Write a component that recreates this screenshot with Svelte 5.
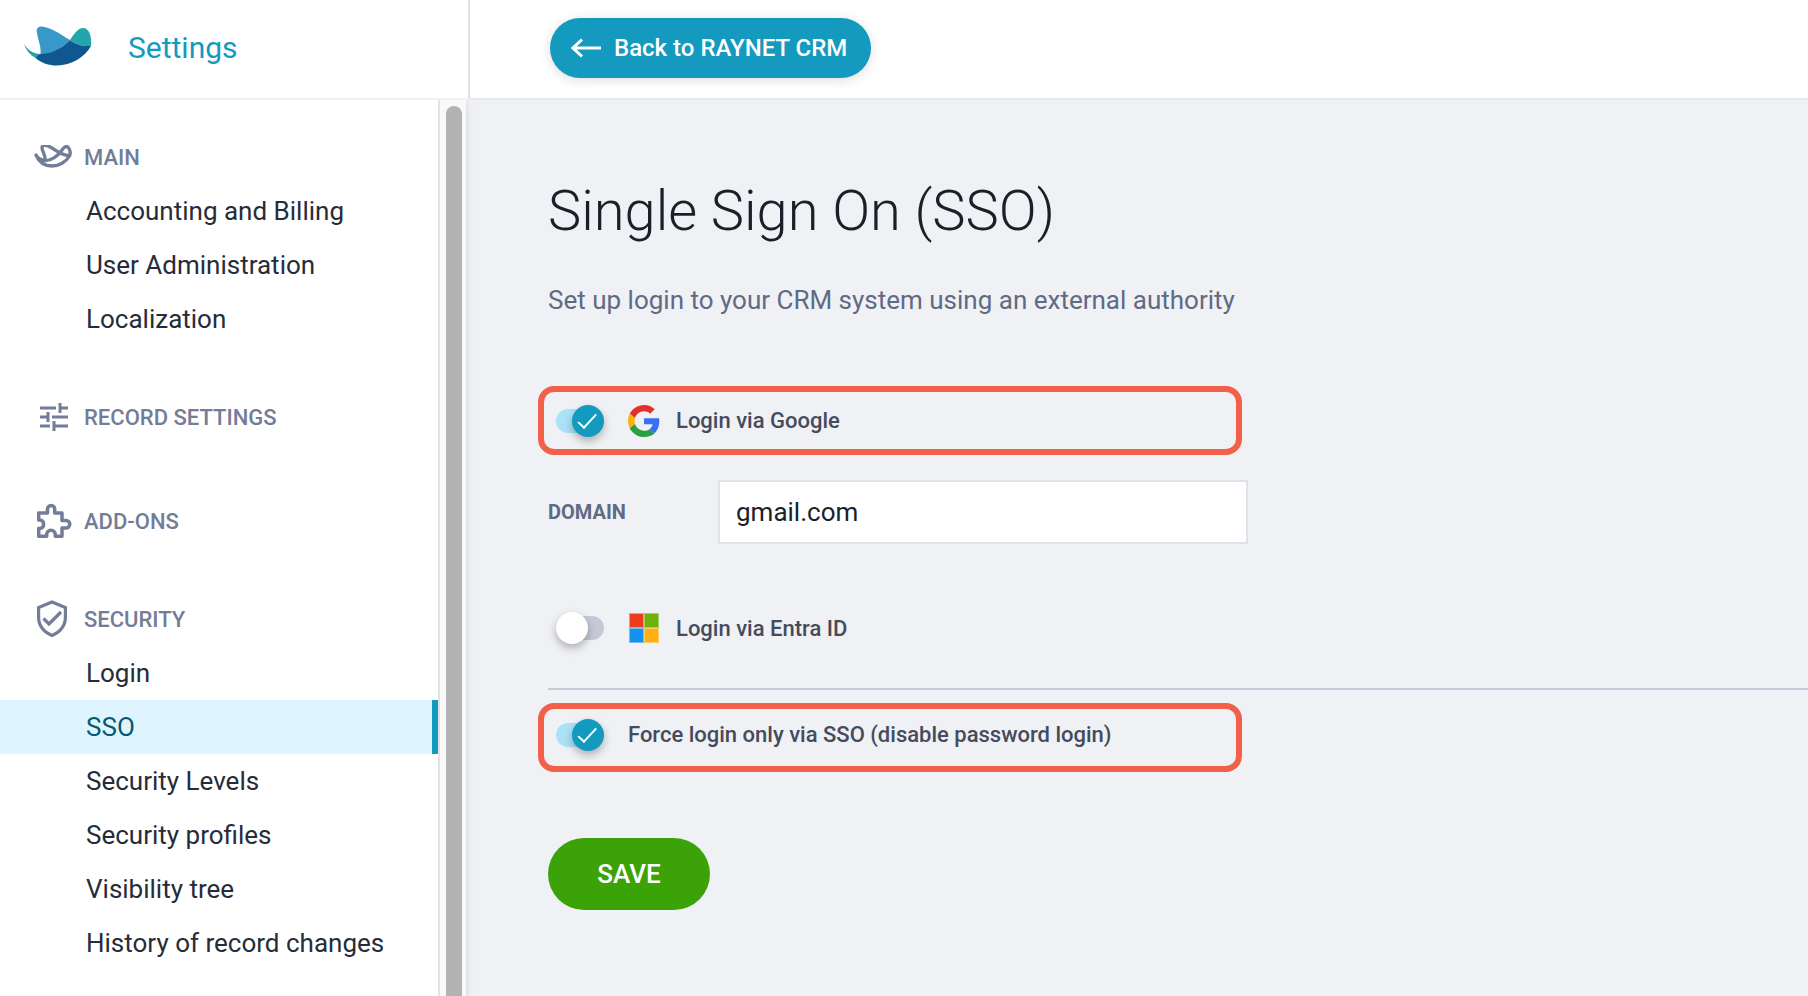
<script>
  const sections = [
    { title: 'MAIN', icon: 'ray', items: ['Accounting and Billing', 'User Administration', 'Localization'] },
    { title: 'RECORD SETTINGS', icon: 'tune', items: [] },
    { title: 'ADD-ONS', icon: 'puzzle', items: [] },
    {
      title: 'SECURITY',
      icon: 'shield',
      items: ['Login', 'SSO', 'Security Levels', 'Security profiles', 'Visibility tree', 'History of record changes']
    }
  ];
  let active = $state('SSO');
  let google = $state(true);
  let entra = $state(false);
  let force = $state(true);
  let domain = $state('gmail.com');
</script>

<div class="page">
  <header class="top">
    <div class="brand">
      <svg class="logo" viewBox="0 0 68 40" aria-hidden="true">
        <path fill="#22a5ab" d="M0 18C3 23 8 27.500 16.500 28L11.500 32C6 29 2 24 0 18Z" />
        <path fill="#3798c9" d="M13 7C12 2.500 14 .500 18 .500C27 1.500 37 8.500 46 14C38 23 28 28 16.500 28.200C17.500 21 14 14 13 7Z" />
        <path fill="#22a5ab" d="M46 14C50 8 54 2 59 2C65 2 68 10 67 20C59 20.500 51 18.500 46 14Z" />
        <path fill="#0f588f" d="M11.500 32C14 29.500 15 28.200 17 28.100C29 27 38 22.500 46 14C51 18.500 59 20.500 67 20C61 31 47 39.500 33 39.500C25 39.500 17 37 11.500 32Z" />
      </svg>
      <span class="brand-name">Settings</span>
    </div>
    <div class="top-main">
      <a class="back" href="#crm">
        <svg viewBox="0 0 30 20" width="30" height="20" aria-hidden="true">
          <path d="M30 10H2M11 1.500L2 10L11 18.500" fill="none" stroke="#fff" stroke-width="3" />
        </svg>
        Back to RAYNET CRM
      </a>
    </div>
  </header>

  <div class="body">
    <nav class="side" aria-label="Settings">
      <div class="menu">
        {#each sections as s}
          <section class="group {s.icon}">
            <h2>
              <span class="gicon">
                {#if s.icon === 'ray'}
                  <svg viewBox="0 1 38 24" width="38" height="24" fill="none" stroke="#737d98" stroke-width="3.300" stroke-linejoin="round" stroke-linecap="round">
                    <path d="M2 11C4 15 7 16 11 16.500C17 17 24 12 28 6C30 3 31 2 33 2.500C36 4 37 9 35.500 12C32 18 25 22 18 22C11 22 5 18 2 11Z" />
                    <path d="M11 16C12 12 8 7 8 4C8 1 11 1 14 2C20 4 25 11 35 11.500" />
                  </svg>
                {:else if s.icon === 'tune'}
                  <svg viewBox="0 0 28 28" width="28" height="28" fill="none" stroke="#737d98" stroke-width="3">
                    <path d="M0 5H16M20 0V10M20 5H28M0 14H8M8 9V19M12 14H28M0 23H10M14 18V28M14 23H28" />
                  </svg>
                {:else if s.icon === 'puzzle'}
                  <svg viewBox="0.500 0 36 36" width="36" height="36" fill="none" stroke="#737d98" stroke-width="3.500" stroke-linejoin="round">
                    <path d="M2.200 10H11V6A3.600 3.600 0 0 1 18.200 6V10H25.500V17.500H29.500A3.700 3.700 0 0 1 29.500 25H25.500V33.300H18.800V31.500A4.300 4.300 0 0 0 10.200 31.500V33.300H2.200V25.500H3.500A4.300 4.300 0 0 0 3.500 17H2.200Z" />
                  </svg>
                {:else}
                  <svg viewBox="0 0.500 30 38" width="30" height="38" fill="none" stroke="#737d98" stroke-width="3.200">
                    <path d="M15 2.500L28.400 8V18C28.400 26 23 33 15 36C7 33 1.600 26 1.600 18V8Z" />
                    <path d="M6.500 19L12 24.500L24 12.500" />
                  </svg>
                {/if}
              </span>
              {s.title}
            </h2>
            {#if s.items.length}
              <ul>
                {#each s.items as item}
                  <li>
                    <a
                      href="#{item.toLowerCase().replaceAll(' ', '-')}"
                      class:active={active === item}
                      aria-current={active === item ? 'page' : undefined}
                      onclick={() => (active = item)}>{item}</a>
                  </li>
                {/each}
              </ul>
            {/if}
          </section>
        {/each}
      </div>
      <div class="scroll" aria-hidden="true"><div class="thumb"></div></div>
    </nav>

    <main>
      <h1>Single Sign On (SSO)</h1>
      <p class="lead">Set up login to your CRM system using an external authority</p>

      <label class="option marked">
        <input class="toggle" type="checkbox" bind:checked={google} />
        <svg class="provider" viewBox="0 0 48 48" aria-hidden="true">
          <path fill="#e52f29" d="M24 9.500c3.540 0 6.710 1.220 9.210 3.600l6.850-6.850C35.900 2.380 30.470 0 24 0 14.620 0 6.510 5.380 2.560 13.220l7.980 6.190C12.430 13.720 17.740 9.500 24 9.500z" />
          <path fill="#376ff5" d="M46.980 24.550c0-1.570-.15-3.090-.38-4.550H24v9.020h12.940c-.58 2.960-2.260 5.480-4.780 7.180l7.730 6c4.510-4.180 7.090-10.360 7.090-17.650z" />
          <path fill="#fbb20b" d="M10.530 28.590c-.48-1.450-.76-2.990-.76-4.590s.27-3.140.76-4.590l-7.980-6.190C.92 16.460 0 20.120 0 24c0 3.880.92 7.540 2.560 10.780l7.970-6.190z" />
          <path fill="#2e9e44" d="M24 48c6.480 0 11.930-2.130 15.890-5.810l-7.730-6c-2.150 1.450-4.920 2.300-8.160 2.300-6.260 0-11.570-4.220-13.470-9.910l-7.980 6.190C6.510 42.620 14.620 48 24 48z" />
        </svg>
        <span>Login via Google</span>
      </label>

      <div class="field">
        <label for="domain">DOMAIN</label>
        <input id="domain" type="text" bind:value={domain} />
      </div>

      <label class="option entra">
        <input class="toggle" type="checkbox" bind:checked={entra} />
        <svg class="provider" viewBox="0 0 32 32" aria-hidden="true">
          <path fill="#f59a80" d="M1 1H16V16H1Z" /><path fill="#a6cf6b" d="M16 1H31V16H16Z" />
          <path fill="#72bdf3" d="M1 16H16V31H1Z" /><path fill="#fccd70" d="M16 16H31V31H16Z" />
          <path fill="#ef3b1d" d="M2 2H15V15H2Z" /><path fill="#70b20b" d="M17 2H30V15H17Z" />
          <path fill="#1592ee" d="M2 17H15V30H2Z" /><path fill="#ffaf10" d="M17 17H30V30H17Z" />
        </svg>
        <span>Login via Entra ID</span>
      </label>

      <hr />

      <label class="option marked force">
        <input class="toggle" type="checkbox" bind:checked={force} />
        <span>Force login only via SSO (disable password login)</span>
      </label>

      <button class="save" type="button">SAVE</button>
    </main>
  </div>
</div>

<style>
  :global(body) {
    margin: 0;
    background: #eff1f5;
  }
  .page {
    min-height: 100vh;
    display: flex;
    flex-direction: column;
    font-family: Roboto, 'Liberation Sans', sans-serif;
    color: #262c38;
  }
  .page * {
    box-sizing: border-box;
  }
  a {
    text-decoration: none;
  }
  .top {
    display: flex;
    background: #fff;
  }
  .brand {
    flex: none;
    width: 470px;
    height: 100px;
    display: flex;
    align-items: flex-start;
    gap: 36px;
    padding: 26px 24px 0;
    border-right: 2px solid #dfe1ea;
    border-bottom: 2px solid #eff0f6;
  }
  .logo {
    width: 68px;
    height: 40px;
  }
  .brand-name {
    font-size: 30px;
    line-height: 44px;
    color: #1499bf;
  }
  .top-main {
    flex: 1;
    display: flex;
    align-items: flex-start;
    padding: 18px 80px 0;
    border-bottom: 2px solid #e7e9ed;
  }
  .back {
    display: flex;
    align-items: center;
    gap: 13px;
    height: 60px;
    padding: 0 24px 0 21px;
    border-radius: 30px;
    background: #1499bf;
    color: #fff;
    font-size: 24px;
    font-weight: 500;
    box-shadow: 0 2px 12px rgba(0, 0, 0, 0.14);
  }
  .body {
    flex: 1;
    display: flex;
  }
  .side {
    flex: none;
    width: 466px;
    display: flex;
    background: #fff;
    box-shadow: 0 2px 8px rgba(0, 0, 0, 0.12);
    clip-path: inset(0 -12px 0 0);
  }
  .menu {
    flex: 1;
    display: flex;
    flex-direction: column;
    gap: 44px;
    padding: 30px 0;
  }
  .scroll {
    width: 28px;
    padding: 6px 4px 0 6px;
    border-left: 2px solid #e2e2e2;
    background: #f9f9f9;
    display: flex;
  }
  .thumb {
    width: 16px;
    border-radius: 8px 8px 0 0;
    background: #b3b3b3;
  }
  h2 {
    display: flex;
    align-items: center;
    height: 54px;
    margin: 0;
    padding-left: 34px;
    font-size: 22px;
    font-weight: 500;
    color: #737d98;
  }
  .gicon {
    flex: none;
    width: 50px;
    height: 38px;
    display: flex;
    align-items: center;
    padding-left: 3px;
  }
  .ray .gicon {
    padding-left: 0;
  }
  .tune .gicon {
    padding-left: 6px;
  }
  .tune {
    padding-bottom: 6px;
  }
  ul {
    list-style: none;
    margin: 0;
    padding: 0;
  }
  .menu a {
    display: block;
    padding-left: 86px;
    font-size: 26px;
    line-height: 54px;
    color: #262c38;
  }
  .menu a.active {
    background: #def4fe;
    border-right: 6px solid #1499bf;
    color: #07596f;
  }
  main {
    flex: 1;
    min-width: 0;
    display: flex;
    flex-direction: column;
    align-items: flex-start;
    padding: 76px 0 40px 82px;
  }
  h1 {
    margin: 0;
    font-size: 56px;
    line-height: 70px;
    font-weight: 300;
    color: #1c1f27;
  }
  .lead {
    margin: 38px 0 0;
    font-size: 26px;
    line-height: 32px;
    color: #616a84;
  }
  .option {
    display: flex;
    align-items: center;
    width: 704px;
    height: 68px;
    margin-left: -10px;
    padding-left: 18px;
    font-size: 22px;
    font-weight: 500;
    color: #454b5c;
  }
  .option span {
    margin-left: 16px;
  }
  .marked {
    height: 69px;
    margin-top: 70px;
    padding-left: 12px;
    border: 6px solid #f16149;
    border-radius: 16px;
  }
  .provider {
    width: 32px;
    height: 32px;
    margin-left: 24px;
  }
  .toggle {
    appearance: none;
    position: relative;
    flex: none;
    width: 48px;
    height: 24px;
    margin: 0;
    border-radius: 12px;
    background: #c5c9d6;
  }
  .toggle::before {
    content: '';
    position: absolute;
    top: -4px;
    left: 0;
    width: 32px;
    height: 32px;
    border-radius: 50%;
    background: #fff;
    box-shadow: 0 4px 8px rgba(0, 0, 0, 0.28);
  }
  .toggle:checked {
    background: #abe2f8;
  }
  .toggle:checked::before {
    left: 16px;
    background: #1499bf;
  }
  .toggle:checked::after {
    content: '';
    position: absolute;
    top: 1px;
    left: 19px;
    width: 7px;
    height: 17px;
    border: solid #fff;
    border-width: 0 2px 2px 0;
    transform: rotate(43deg);
    transform-origin: 100% 100%;
  }
  .field {
    display: flex;
    align-items: center;
    margin-top: 25px;
    width: 700px;
  }
  .field label {
    width: 170px;
    font-size: 20px;
    font-weight: 700;
    color: #616a84;
  }
  .field input {
    flex: 1;
    min-width: 0;
    height: 64px;
    padding: 0 16px;
    border: 2px solid #e0e2ea;
    background: #fff;
    font: 26px Roboto, 'Liberation Sans', sans-serif;
    color: #1c1f27;
  }
  .entra {
    margin-top: 50px;
  }
  hr {
    align-self: stretch;
    height: 2px;
    margin: 26px 0 0;
    border: 0;
    background: #c5cad8;
  }
  .force {
    margin-top: 13px;
    padding-bottom: 6px;
  }
  .force span {
    margin-left: 24px;
  }
  .save {
    width: 162px;
    height: 72px;
    margin-top: 66px;
    border: 0;
    border-radius: 36px;
    background: #3ba307;
    color: #fff;
    font: 500 26px Roboto, 'Liberation Sans', sans-serif;
  }
</style>
